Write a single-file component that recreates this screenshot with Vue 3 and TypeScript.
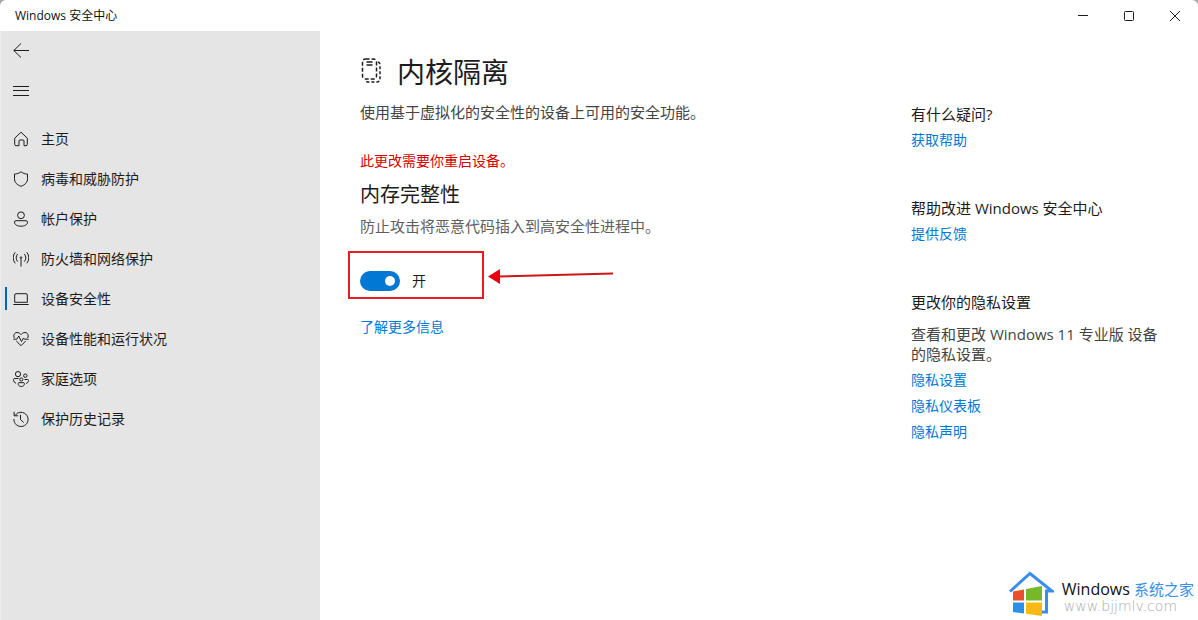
<script setup lang="ts">
import { ref } from 'vue'

interface NavItem {
  label: string
  paths: string[]
}

const navItems: NavItem[] = [
  { label: '主页', paths: ['M1.7 7.2 8 1.2l6.3 6v6.2a1.3 1.3 0 0 1-1.3 1.3h-2V10a1 1 0 0 0-1-1H7a1 1 0 0 0-1 1v4.7H3a1.3 1.3 0 0 1-1.3-1.3Z'] },
  { label: '病毒和威胁防护', paths: ['M8 .8c2 1.500 4.200 2.200 6.500 2.300v4.600c0 3.600-2.300 6.100-6.500 7.600-4.200-1.500-6.500-4-6.500-7.600V3.100C3.800 3 6 2.300 8 .8Z'] },
  { label: '帐户保护', paths: ['M8 .9a3.400 3.400 0 1 1 0 6.800A3.400 3.400 0 0 1 8 .9Z', 'M3 9.700h10a1.500 1.500 0 0 1 1.500 1.500c0 2.400-2.700 4-6.500 4s-6.500-1.600-6.500-4A1.500 1.500 0 0 1 3 9.700Z'] },
  { label: '防火墙和网络保护', paths: ['M8 7.500V15.500', 'M8 5.800a.8.8 0 1 1 0 1.600.8.8 0 0 1 0-1.600Z', 'M4.700 10.600a5.500 5.500 0 0 1 0-7.600M11.300 10.600a5.500 5.500 0 0 0 0-7.600', 'M2.200 12.300a8.500 8.500 0 0 1 0-11M13.800 12.300a8.500 8.500 0 0 0 0-11'] },
  { label: '设备安全性', paths: ['M3 2.700h10a1.300 1.300 0 0 1 1.300 1.300v7.300H1.700V4A1.300 1.300 0 0 1 3 2.700Z', 'M.3 13.500h15.400'] },
  { label: '设备性能和运行状况', paths: ['M1.400 7C0 4.500 1.200 1.600 4 1.500c1.800 0 3 .9 4 2.100 1-1.200 2.200-2.100 4-2.100 2.800.1 4 3 2.600 5.500M3.300 10 8 14.700l4.700-4.700', 'M.3 8.200h3.500l2-3.200 2.700 5.600 2-3.600 1 1.200h4.200'] },
  { label: '家庭选项', paths: ['M5 .5a2.600 2.600 0 1 1 0 5.200A2.600 2.600 0 0 1 5 .5Z', 'M12.300 3a1.700 1.700 0 1 1 0 3.400 1.700 1.700 0 0 1 0-3.400Z', 'M8.300 6.900a1.600 1.600 0 1 1 0 3.200 1.600 1.600 0 0 1 0-3.200Z', 'M5.500 7.500H1.300C0 7.500.2 11.600 3 12.200M11.500 8.500h3.200c1.600 0 1 3.300-1.600 4', 'M5.800 11.700h5c1.200 0 1 3.800-2.500 3.800s-3.700-3.800-2.500-3.800Z'] },
  { label: '保护历史记录', paths: ['M2.200 4.300A7.100 7.100 0 1 1 .9 8', 'M1.100 .8v4h4.100', 'M7.500 3.800v4.700l3.200 3'] },
]

const activeLabel = ref('设备安全性')
const memoryIntegrity = ref(true)
const privacyLinks: string[] = ['隐私设置', '隐私仪表板', '隐私声明']
</script>

<template>
  <div class="window">
    <header class="titlebar">
      <span class="caption">Windows 安全中心</span>
      <div class="window-controls">
        <button type="button" aria-label="最小化">
          <svg viewBox="0 0 12 12"><path d="M1 5.500h10" /></svg>
        </button>
        <button type="button" aria-label="最大化">
          <svg viewBox="0 0 12 12"><rect x="1.500" y="1.500" width="9" height="9" rx="1" /></svg>
        </button>
        <button type="button" aria-label="关闭">
          <svg viewBox="0 0 12 12"><path d="m1 1 10 10M11 1 1 11" /></svg>
        </button>
      </div>
    </header>

    <div class="body">
      <nav class="sidebar">
        <button type="button" class="nav-button" aria-label="返回">
          <svg viewBox="0 0 16 16"><path d="M16 7.500H.8M8 .5 .8 7.500 8 14.500" /></svg>
        </button>
        <button type="button" class="nav-button" aria-label="菜单">
          <svg viewBox="0 0 16 16"><path d="M0 3.500h16M0 7.500h16M0 12.500h16" /></svg>
        </button>
        <ul class="nav-list">
          <li v-for="item in navItems" :key="item.label">
            <a
              href="#"
              class="nav-link"
              :class="{ active: item.label === activeLabel }"
              @click.prevent="activeLabel = item.label"
            >
              <svg viewBox="0 0 16 16">
                <path v-for="d in item.paths" :key="d" :d="d" />
              </svg>
              <span>{{ item.label }}</span>
            </a>
          </li>
        </ul>
      </nav>

      <main class="content">
        <div class="heading">
          <svg class="chip" viewBox="0 0 22 28">
            <rect x="2.500" y="1" width="14" height="20" rx="3" stroke-dasharray="4 2" />
            <path d="M6.500 4h6M6.500 7h6" />
            <path d="M18 4a3 3 0 0 1 2 3v14a3 3 0 0 1-3 3H9a3 3 0 0 1-3-1" stroke-dasharray="3 2" />
          </svg>
          <h1>内核隔离</h1>
        </div>
        <p class="intro">使用基于虚拟化的安全性的设备上可用的安全功能。</p>
        <p class="warning">此更改需要你重启设备。</p>
        <h2>内存完整性</h2>
        <p class="detail">防止攻击将恶意代码插入到高安全性进程中。</p>
        <div class="toggle-row">
          <label class="toggle">
            <input v-model="memoryIntegrity" type="checkbox" role="switch" />
            <span>{{ memoryIntegrity ? '开' : '关' }}</span>
          </label>
          <div class="callout"></div>
          <svg class="arrow" viewBox="0 0 126 18">
            <path class="shaft" d="M10 9.500 125 6.500" />
            <path class="tip" d="M0 9.500 12 2v15Z" />
          </svg>
        </div>
        <a href="#" class="link">了解更多信息</a>
      </main>

      <aside class="help">
        <section>
          <h3>有什么疑问?</h3>
          <a href="#" class="link">获取帮助</a>
        </section>
        <section>
          <h3>帮助改进 Windows 安全中心</h3>
          <a href="#" class="link">提供反馈</a>
        </section>
        <section>
          <h3>更改你的隐私设置</h3>
          <p>查看和更改 Windows 11 专业版 设备的隐私设置。</p>
          <a v-for="name in privacyLinks" :key="name" href="#" class="link">{{ name }}</a>
        </section>
      </aside>
    </div>

    <div class="watermark">
      <svg viewBox="0 0 46 46">
        <path class="house" d="M2 21.500 22 3.500 44 21H38.500v21H34" />
        <path fill="#e8502d" d="m5 21.500 11-2v11H5Z" />
        <path fill="#76b82a" d="m18 19 16-3v14.500H18Z" />
        <path fill="#2d8fe8" d="M5 32.500h11v11L5 42Z" />
        <path fill="#fbb814" d="M18 32.500h16V46l-16-2.300Z" />
      </svg>
      <div>
        <div class="brand">Windows <span>系统之家</span></div>
        <div class="site">www.bjjmlv.com</div>
      </div>
    </div>
  </div>
</template>

<style>
body {
  margin: 0;
  background: #a8a8a8;
}
</style>

<style scoped>
.window {
  position: relative;
  display: flex;
  flex-direction: column;
  min-height: 100vh;
  background: #fff;
  border-radius: 6px 6px 0 0;
  overflow: hidden;
  color: #1c1c1c;
  font: 15px/20px "Open Sans", "Noto Sans CJK SC", sans-serif;
}

h1,
h2,
h3,
p,
ul {
  margin: 0;
  padding: 0;
  font-weight: 400;
}

button {
  padding: 0;
  border: 0;
  background: none;
  color: inherit;
}

a {
  color: inherit;
  text-decoration: none;
}

svg {
  display: block;
  flex: none;
  fill: none;
  stroke: currentColor;
}

.titlebar {
  display: flex;
  justify-content: space-between;
  height: 31px;
}

.caption {
  padding-left: 15px;
  font-size: 12px;
  line-height: 31px;
  color: #111;
}

.window-controls {
  display: flex;
}

.window-controls button {
  display: grid;
  place-items: center;
  width: 46px;
}

.window-controls svg {
  width: 12px;
  height: 12px;
}

.body {
  display: flex;
  flex: 1;
}

.sidebar {
  flex: none;
  box-sizing: border-box;
  width: 320px;
  background: #e5e5e5;
  border-left: 1px solid #ededed;
}

.nav-button {
  display: flex;
  align-items: center;
  height: 40px;
  padding: 0 12px;
}

.sidebar svg {
  width: 16px;
  height: 16px;
}

.nav-list {
  padding-top: 8px;
  list-style: none;
}

.nav-link {
  position: relative;
  display: flex;
  align-items: center;
  gap: 12px;
  height: 40px;
  padding-left: 12px;
  font-size: 14px;
}

.nav-link.active::before {
  content: "";
  position: absolute;
  left: 4px;
  top: 8px;
  width: 2px;
  height: 23px;
  background: #0067b8;
}

.content {
  flex: 1;
  min-width: 0;
  padding: 21px 40px 40px;
}

.heading {
  display: flex;
  align-items: center;
  gap: 15px;
}

.chip {
  width: 22px;
  height: 28px;
  stroke-width: 1.5;
}

h1 {
  font-size: 28px;
  line-height: 40px;
}

.intro {
  margin-top: 10px;
  color: #444;
}

.warning {
  margin-top: 29px;
  font-size: 14px;
  color: #d80000;
}

h2 {
  margin-top: 10px;
  font-size: 20px;
  line-height: 28px;
}

.detail {
  margin-top: 7px;
  color: #606060;
}

.toggle-row {
  position: relative;
  height: 20px;
  margin: 35px 0 26px;
}

.toggle {
  display: flex;
  align-items: center;
  gap: 12px;
  width: fit-content;
  font-size: 14px;
}

.toggle input {
  display: flex;
  align-items: center;
  appearance: none;
  box-sizing: border-box;
  width: 40px;
  height: 20px;
  margin: 0;
  padding: 0 5px;
  border-radius: 10px;
  background: #8a8a8a;
}

.toggle input::before {
  content: "";
  width: 10px;
  height: 10px;
  border-radius: 50%;
  background: #fff;
}

.toggle input:checked {
  justify-content: flex-end;
  background: #0078d4;
}

.callout {
  position: absolute;
  left: -12px;
  top: -20px;
  box-sizing: border-box;
  width: 136px;
  height: 48px;
  border: 2px solid #ea1c24;
  pointer-events: none;
}

.arrow {
  position: absolute;
  left: 128px;
  top: -4px;
  width: 126px;
  height: 18px;
}

.shaft {
  stroke: #d01515;
  stroke-width: 2;
}

.tip {
  fill: #e60012;
  stroke: none;
}

.link {
  display: block;
  width: fit-content;
  font-size: 14px;
  color: #0078d4;
}

.help {
  display: flex;
  flex: none;
  flex-direction: column;
  gap: 48px;
  box-sizing: border-box;
  width: 287px;
  padding: 73px 40px 40px 0;
}

.help h3 {
  font-size: 15px;
}

.help p {
  margin: 12px 0 6px;
  color: #444;
}

.help .link {
  margin-top: 6px;
}

.watermark {
  position: absolute;
  right: 4px;
  bottom: 4px;
  display: flex;
  align-items: center;
  gap: 8px;
}

.watermark svg {
  width: 46px;
  height: 46px;
  stroke: none;
}

.watermark .house {
  stroke: #3a8dea;
  stroke-width: 3;
}

.brand {
  padding-top: 8px;
  font-size: 16px;
  font-weight: 500;
  line-height: 18px;
  color: #111;
}

.brand span {
  font-size: 15px;
  font-weight: 400;
  color: #3a8dea;
}

.site {
  padding-left: 2px;
  font: 14px/16px "DejaVu Sans", sans-serif;
  font-weight: 200;
  color: #aaa;
}
</style>
